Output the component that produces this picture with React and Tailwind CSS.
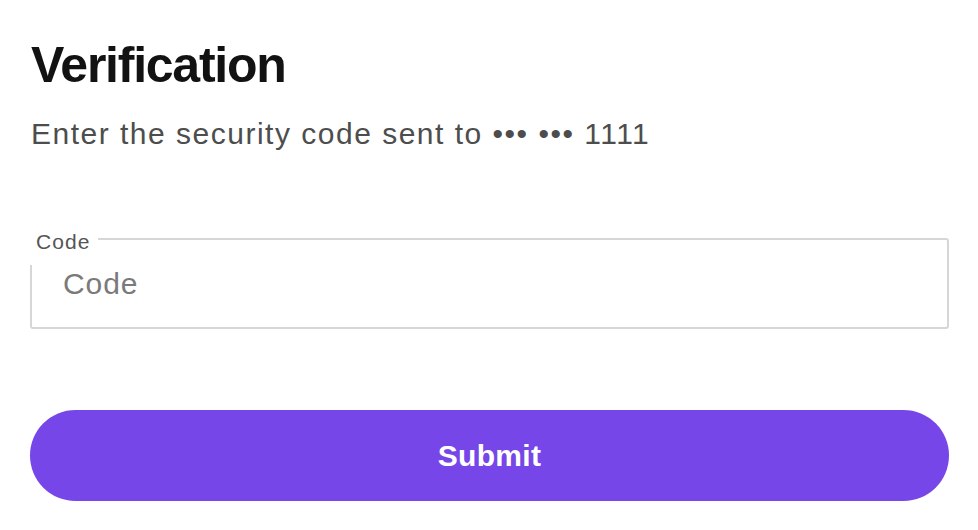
export default function App() {
  return (
    <div
      className="w-[978px] h-[530px] bg-white pl-[30px] pr-[29px] pt-[40px] overflow-hidden"
      style={{ fontFamily: '"Liberation Sans", Arial, sans-serif' }}
    >
      <h1 className="text-[50px] leading-[50px] font-bold tracking-[-0.025em] text-[#121212] pl-[1px]">
        Verification
      </h1>
      <p className="mt-[29px] text-[30px] leading-[30px] tracking-[0.05em] text-[#4d4d4d] pl-[1px]">
        Enter the security code sent to ••• ••• 1111
      </p>
      <div className="relative mt-[89px] h-[91px] border-2 border-[#d6d6d6] rounded-[3px]">
        <label className="absolute z-10 left-[-4px] top-[-12px] h-[37px] w-[70px] bg-white pl-[8px] pt-[3px] text-[21px] leading-[21px] tracking-[0.05em] text-[#555555]">
          Code
        </label>
        <input
          type="text"
          placeholder="Code"
          className="w-full h-full bg-transparent outline-none pl-[31px] text-[30px] leading-[30px] tracking-[0.03em] text-[#333] placeholder:text-[#7a7a7a]"
          style={{ fontFamily: '"Liberation Sans", Arial, sans-serif' }}
        />
      </div>
      <button
        className="mt-[81px] w-full h-[91px] rounded-full bg-[#7646e9] text-white text-[30px] font-bold tracking-[0.01em] flex items-center justify-center"
        style={{ fontFamily: '"Liberation Sans", Arial, sans-serif' }}
      >
        Submit
      </button>
    </div>
  );
}
